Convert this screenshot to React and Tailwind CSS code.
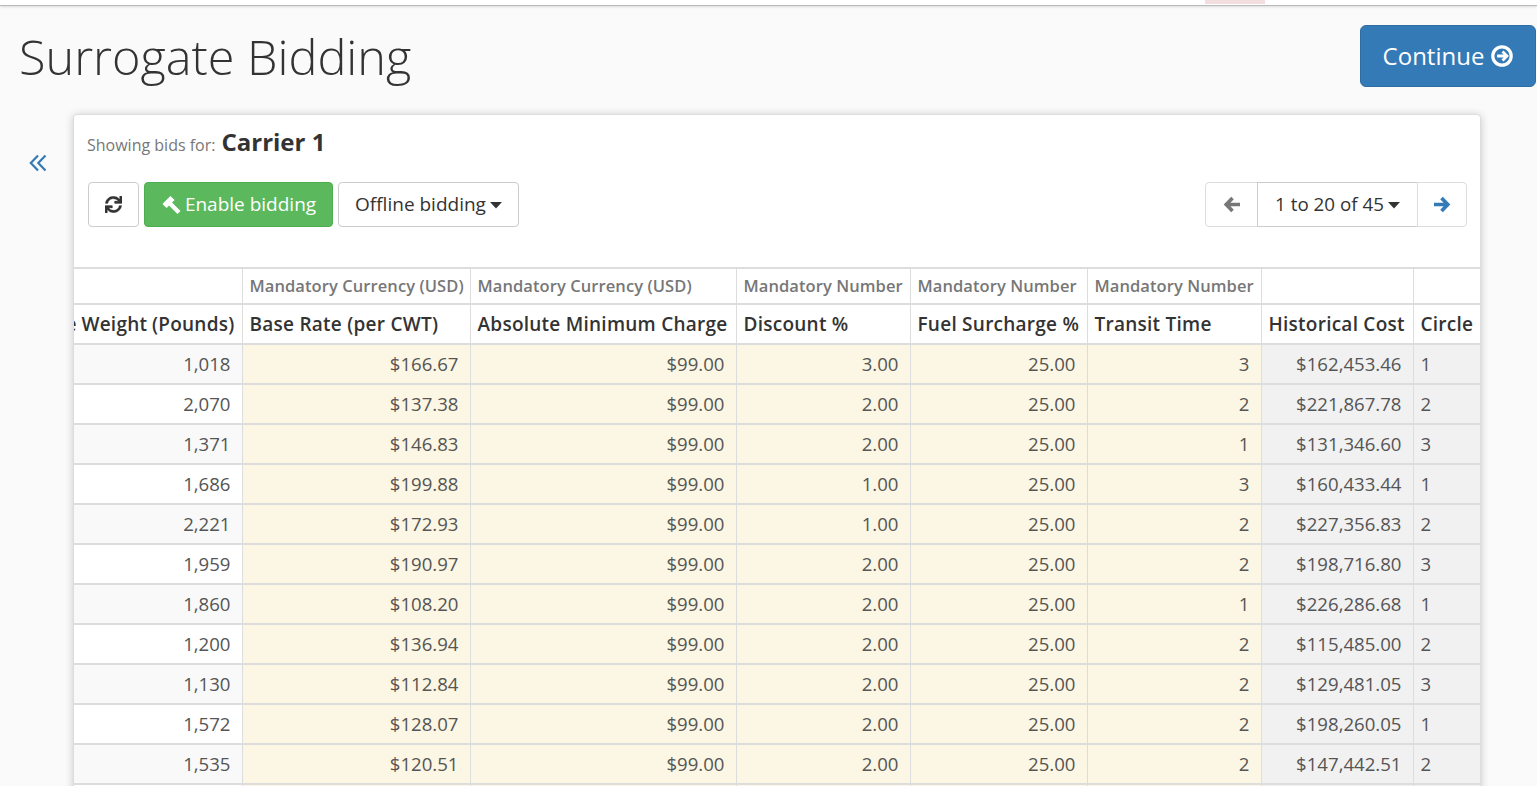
import React from "react";
import { FaSync } from "react-icons/fa";

const rows = [
  ["1,018", "$166.67", "3.00", "3", "$162,453.46", "1"],
  ["2,070", "$137.38", "2.00", "2", "$221,867.78", "2"],
  ["1,371", "$146.83", "2.00", "1", "$131,346.60", "3"],
  ["1,686", "$199.88", "1.00", "3", "$160,433.44", "1"],
  ["2,221", "$172.93", "1.00", "2", "$227,356.83", "2"],
  ["1,959", "$190.97", "2.00", "2", "$198,716.80", "3"],
  ["1,860", "$108.20", "2.00", "1", "$226,286.68", "1"],
  ["1,200", "$136.94", "2.00", "2", "$115,485.00", "2"],
  ["1,130", "$112.84", "2.00", "2", "$129,481.05", "3"],
  ["1,572", "$128.07", "2.00", "2", "$198,260.05", "1"],
  ["1,535", "$120.51", "2.00", "2", "$147,442.51", "2"],
];

const sub = "h-[36px] border-r border-b-2 border-[#ddd] px-[7px] text-left text-[16.5px] font-semibold tracking-[0.08px] text-[#777] whitespace-nowrap overflow-hidden";
const head = "h-[40px] border-r border-b-2 border-[#ddd] px-[7px] text-left text-[19px] font-semibold tracking-[0.25px] text-[#333] whitespace-nowrap";
const cell = "h-[40px] border-r border-b-2 border-[#ddd] pl-[12px] pr-[11px] text-[18.6px] text-[#555] whitespace-nowrap";

const Caret = () => (
  <svg width="12" height="7" viewBox="0 0 12 7" className="mt-[1px] shrink-0"><polygon points="0,0 12,0 6,6.5" fill="currentColor" /></svg>
);
const Arrow = ({ flip }) => (
  <svg width="18" height="17" viewBox="0 0 18 17" className={flip ? "-scale-x-100" : ""} fill="none" stroke="currentColor" strokeWidth="3.6">
    <path d="M9.5 2 L3.2 8.5 L9.5 15 M3.5 8.5 H17" />
  </svg>
);

export default function App() {
  return (
    <div className="h-screen overflow-hidden bg-[#fafafa] font-['Open_Sans',sans-serif] text-[#333]">
      <div className="flex h-[6px] justify-end border-b border-[#bbb] bg-white pr-[272px] shadow-sm">
        <div className="h-[4px] w-[60px] bg-[#f2dede]" />
      </div>
      <div className="flex items-start justify-between pl-[19px] pr-px pt-[19px]">
        <h1 className="text-[48.6px] font-light leading-[62px] text-[#333]">Surrogate Bidding</h1>
        <button className="flex h-[62px] w-[176px] items-center justify-center gap-[7px] rounded-[6px] border border-[#2e6da4] bg-[#337ab7] text-[24px] text-white">
          Continue
          <svg width="22" height="22" viewBox="0 0 22 22" fill="none" stroke="currentColor">
            <circle cx="11" cy="11" r="9.2" strokeWidth="3.2" />
            <path d="M11.5 6.5 L16 11 L11.5 15.5 M15.5 11 H6" strokeWidth="2.8" />
          </svg>
        </button>
      </div>
      <div className="flex items-start pt-[27px]">
        <div className="flex w-[73px] justify-center pt-[40px] text-[#337ab7]">
          <svg width="18" height="18" viewBox="0 0 18 18" className="ml-[3px]" fill="none" stroke="currentColor" strokeWidth="2.2">
            <path d="M9 1.5 L1.8 9 L9 16.5 M16.5 1.5 L9.3 9 L16.5 16.5" />
          </svg>
        </div>
        <div className="w-[1408px] rounded-[4px] border border-[#ddd] bg-white shadow-[0_1px_8px_rgba(0,0,0,0.2)]">
          <div className="flex items-baseline gap-[6px] px-[13px] pt-[9px]">
            <span className="text-[16px] text-[#777]">Showing bids for:</span>
            <span className="text-[24px] font-bold leading-[36px] text-[#333]">Carrier 1</span>
          </div>
          <div className="flex items-center justify-between pl-[14px] pr-[13px] pt-[22px] pb-[40px]">
            <div className="flex gap-[5px]">
              <button className="flex h-[45px] w-[51px] items-center justify-center rounded-[4px] border border-[#ccc] bg-white text-[17px] text-[#333]"><FaSync stroke="currentColor" strokeWidth="10" /></button>
              <button className="flex h-[45px] w-[189px] items-center justify-center gap-[3px] rounded-[4px] border border-[#4cae4c] bg-[#5cb85c] text-[19px] text-white">
                <svg width="21" height="21" viewBox="0 0 21 21" fill="currentColor">
                  <polygon points="1.4,9.9 9.4,1.9 13.6,6.1 5.6,14.1" />
                  <polygon points="10.5,8 19.5,17 16.5,20 7.5,11" />
                </svg>
                Enable bidding
              </button>
              <button className="flex h-[45px] w-[181px] items-center justify-center gap-[4px] rounded-[4px] border border-[#ccc] bg-white text-[19px] text-[#333]">Offline bidding<Caret /></button>
            </div>
            <div className="flex h-[45px] text-[18.8px]">
              <button className="flex w-[53px] items-center justify-center rounded-l-[4px] border border-[#ddd] bg-white text-[#777]"><Arrow /></button>
              <button className="-ml-px flex w-[161px] items-center justify-center gap-[4px] border border-[#ccc] bg-white text-[#333]">1 to 20 of 45<Caret /></button>
              <button className="-ml-px flex w-[50px] items-center justify-center rounded-r-[4px] border border-[#ddd] bg-white text-[#337ab7]"><Arrow flip /></button>
            </div>
          </div>
          <table className="w-[1406px] table-fixed border-collapse border-t-2 border-[#ddd]">
            <colgroup>
              <col className="w-[168px]" />
              <col className="w-[228px]" />
              <col className="w-[266px]" />
              <col className="w-[174px]" />
              <col className="w-[177px]" />
              <col className="w-[174px]" />
              <col className="w-[152px]" />
              <col className="w-[67px]" />
            </colgroup>
            <thead>
              <tr>
                <th className={sub}></th>
                <th className={sub}>Mandatory Currency (USD)</th>
                <th className={sub}>Mandatory Currency (USD)</th>
                <th className={sub}>Mandatory Number</th>
                <th className={sub}>Mandatory Number</th>
                <th className={sub}>Mandatory Number</th>
                <th className={sub}></th>
                <th className="h-[36px] border-b-2 border-[#ddd]"></th>
              </tr>
              <tr>
                <th className={head + " overflow-hidden text-right"}><div className="flex justify-end [word-spacing:-0.5px]">Average Weight (Pounds)</div></th>
                <th className={head}>Base Rate (per CWT)</th>
                <th className={head}>Absolute Minimum Charge</th>
                <th className={head}>Discount %</th>
                <th className={head}>Fuel Surcharge %</th>
                <th className={head}>Transit Time</th>
                <th className={head}>Historical Cost</th>
                <th className="h-[40px] border-b-2 border-[#ddd] px-[7px] text-left text-[19px] font-semibold tracking-[0.25px] text-[#333]">Circle</th>
              </tr>
            </thead>
            <tbody>
              {rows.map((r, i) => (
                <tr key={i}>
                  <td className={cell + " text-right " + (i % 2 === 0 ? "bg-[#f9f9f9]" : "bg-white")}>{r[0]}</td>
                  <td className={cell + " text-right bg-[#fcf7e4]"}>{r[1]}</td>
                  <td className={cell + " text-right bg-[#fcf7e4]"}>$99.00</td>
                  <td className={cell + " text-right bg-[#fcf7e4]"}>{r[2]}</td>
                  <td className={cell + " text-right bg-[#fcf7e4]"}>25.00</td>
                  <td className={cell + " text-right bg-[#fcf7e4]"}>{r[3]}</td>
                  <td className={cell + " text-right bg-[#f1f1f1]"}>{r[4]}</td>
                  <td className="h-[40px] border-b-2 border-[#ddd] bg-[#f1f1f1] px-[7px] text-[18.6px] text-[#555]">{r[5]}</td>
                </tr>
              ))}
              <tr>
                <td className={cell + " bg-white"}></td>
                <td className={cell + " bg-[#fcf7e4]"}></td>
                <td className={cell + " bg-[#fcf7e4]"}></td>
                <td className={cell + " bg-[#fcf7e4]"}></td>
                <td className={cell + " bg-[#fcf7e4]"}></td>
                <td className={cell + " bg-[#fcf7e4]"}></td>
                <td className={cell + " bg-[#f1f1f1]"}></td>
                <td className="h-[40px] bg-[#f1f1f1]"></td>
              </tr>
            </tbody>
          </table>
        </div>
      </div>
    </div>
  );
}
